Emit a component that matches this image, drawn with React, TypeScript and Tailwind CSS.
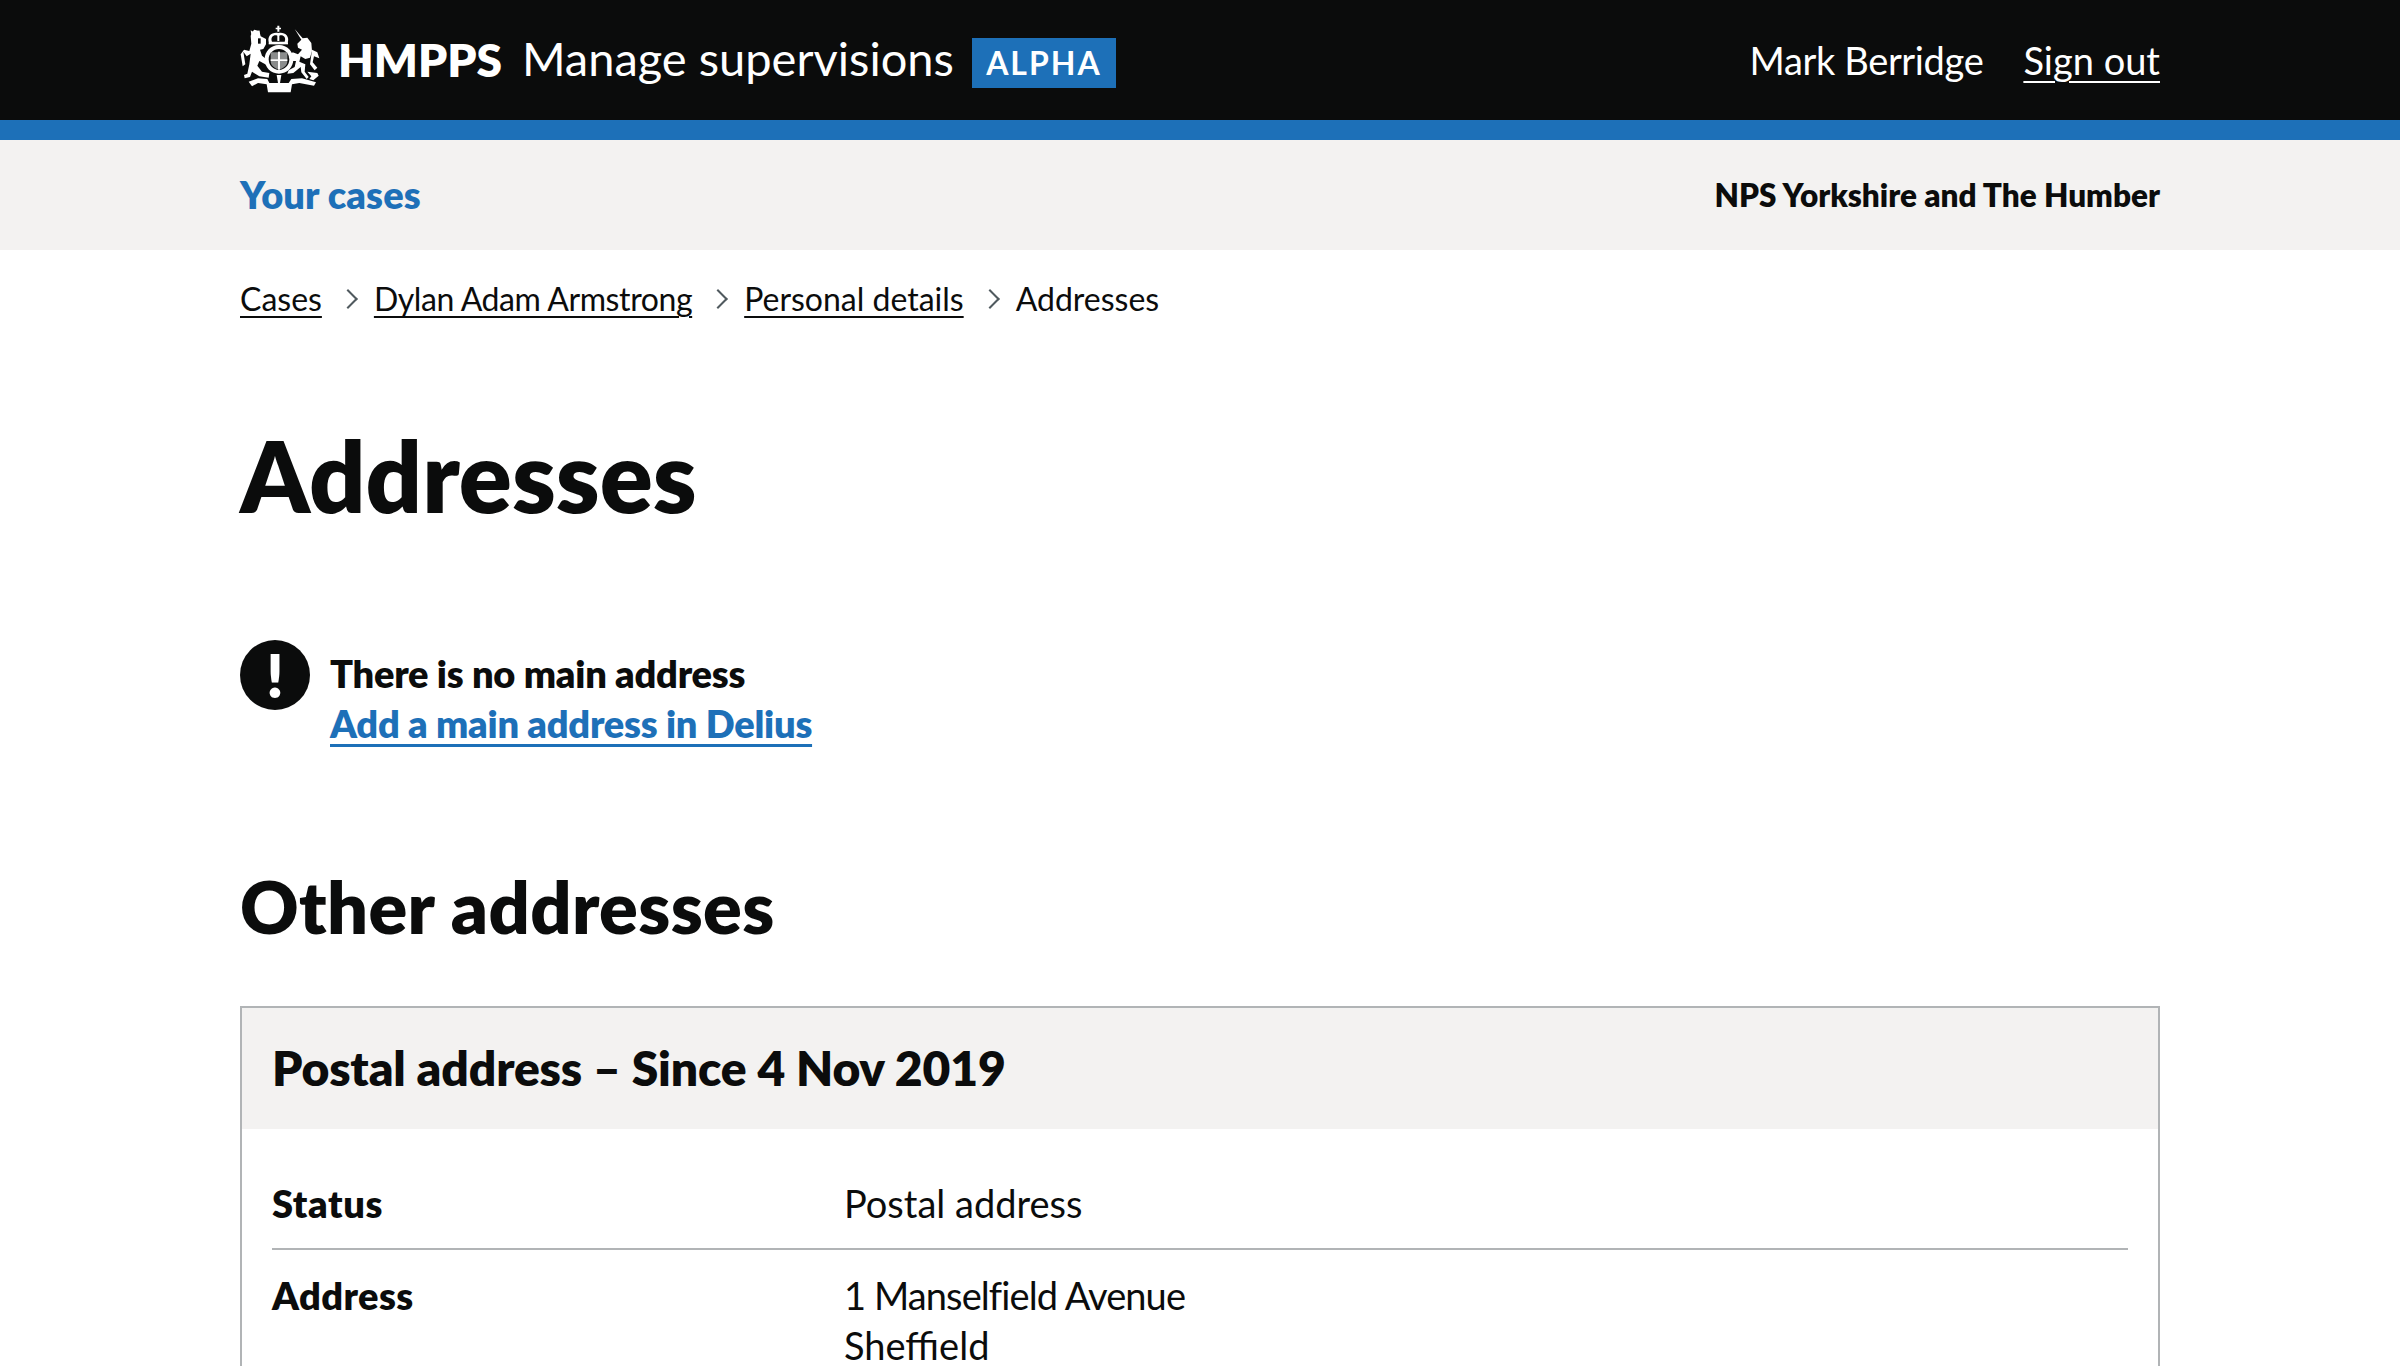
const fontStack = "font-['Lato','Noto_Sans',sans-serif]";

// simplified royal coat of arms, coordinates taken from the reference crop
function Crest() {
  return (
    <svg viewBox="30 10 240 210" className="w-[80px] h-[70px] shrink-0" fill="#ffffff">
      {/* crown */}
      <path d="M118 66 C108 42 128 30 145 34 C162 30 182 42 172 66 Z M126 60 L164 60 C170 46 158 38 148 42 L148 58 L142 58 L142 42 C132 38 120 46 126 60 Z" fillRule="evenodd" />
      <rect x="116" y="62" width="58" height="6" />
      <path d="M142 30 L142 23 L137 23 L137 18 L142 18 L142 12 L148 12 L148 18 L153 18 L153 23 L148 23 L148 30 Z" />
      {/* shield ring */}
      <path d="M147 70 C172 70 190 90 190 113 C190 137 172 156 147 156 C122 156 104 137 104 113 C104 90 122 70 147 70 Z M147 82 C130 82 116 96 116 113 C116 131 130 145 147 145 C164 145 178 131 178 113 C178 96 164 82 147 82 Z" fillRule="evenodd" />
      <path d="M122 92 L172 92 L172 118 C172 132 160 140 147 144 C134 140 122 132 122 118 Z" fill="#8a8c8c" />
      <rect x="144" y="90" width="6" height="54" fill="#ffffff" />
      <rect x="122" y="113" width="50" height="5" fill="#ffffff" />
      {/* lion */}
      <path d="M62 42 L72 24 L88 28 L92 44 L108 52 L108 68 L100 82 L90 84 L96 102 L116 118 L110 130 L88 118 L82 132 L96 150 L118 154 L116 168 L88 164 L66 150 L60 166 L44 170 L42 160 L52 156 L58 128 L62 96 L50 104 L40 90 L46 128 L38 134 L32 98 L42 84 L58 88 L64 66 Z" />
      <path d="M64 40 L62 26 L70 30 L74 24 L80 30 L88 26 L90 42 Z" />
      <path d="M84 50 L92 50 L92 66 L84 66 Z" fill="#0b0c0c" />
      {/* unicorn */}
      <path d="M194 22 L218 50 L232 48 L244 64 L246 88 L240 108 L226 112 L212 104 L208 120 L226 128 L224 150 L236 166 L230 172 L214 152 L212 136 L190 154 L172 156 L176 146 L194 136 L198 118 L184 118 L176 106 L188 92 L204 98 L216 84 L204 78 L202 66 L214 54 Z" />
      <path d="M246 84 L262 92 L268 110 L252 104 L248 122 L262 138 L254 146 L240 128 Z" />
      <path d="M232 150 L262 154 L266 162 L250 176 L238 172 L244 164 Z" />
      {/* motto ribbon */}
      <path d="M56 180 L84 170 L112 172 L118 184 L176 184 L184 172 L216 170 L258 182 L252 192 L208 184 L186 188 L182 212 L114 212 L110 188 L84 184 L66 194 Z" />
      <path d="M140 160 L154 160 L150 184 L144 184 Z" />
    </svg>
  );
}

function Chevron() {
  return (
    <span className="mx-[16px] flex w-[20px] justify-center">
      <span className="block h-[14px] w-[14px] rotate-45 border-t-2 border-r-2 border-[#505a5f]" />
    </span>
  );
}

export default function App() {
  return (
    <div className={`h-[1366px] overflow-hidden bg-white text-[#0b0c0c] ${fontStack}`}>
      {/* header */}
      <header className="h-[140px] border-b-[20px] border-[#1d70b8] bg-[#0b0c0c] text-white">
        <div className="mx-auto flex h-[120px] w-[1920px] items-center justify-between">
          <div className="flex items-center">
            <Crest />
            <span className="ml-[18px] text-[46px] leading-none font-extrabold">HMPPS</span>
            <span className="-mt-[3px] ml-[20px] text-[47px] leading-none">Manage supervisions</span>
            <span className="mt-[6px] ml-[18px] flex h-[50px] w-[144px] items-center justify-center bg-[#1d70b8] text-[32px] font-bold tracking-[2px]">
              ALPHA
            </span>
          </div>
          <div className="flex items-center text-[38px]">
            <span className="tracking-[-0.35px]">Mark Berridge</span>
            <a className="ml-[40px] underline underline-offset-[6px] decoration-2">Sign out</a>
          </div>
        </div>
      </header>

      {/* sub nav */}
      <div className="h-[110px] bg-[#f3f2f1]">
        <div className="mx-auto flex h-full w-[1920px] items-center justify-between">
          <a className="-mt-[2px] text-[38px] font-extrabold tracking-[0.1px] text-[#1d70b8]">Your cases</a>
          <span className="mt-[2px] text-[31.5px] font-extrabold">NPS Yorkshire and The Humber</span>
        </div>
      </div>

      <main className="mx-auto w-[1920px]">
        <nav className="mt-[29px] flex h-[40px] items-center text-[32px] leading-[40px]">
          <a className="underline underline-offset-[5px] decoration-2">Cases</a>
          <Chevron />
          <a className="tracking-[-0.4px] underline underline-offset-[5px] decoration-2">Dylan Adam Armstrong</a>
          <Chevron />
          <a className="underline underline-offset-[5px] decoration-2">Personal details</a>
          <Chevron />
          <span>Addresses</span>
        </nav>

        <h1 className="mt-[106px] text-[98.5px] leading-[100px] font-extrabold">Addresses</h1>

        {/* warning */}
        <div className="mt-[115px] flex h-[100px]">
          <div className="flex h-[70px] w-[70px] shrink-0 items-center justify-center rounded-full bg-[#0b0c0c] text-[60px] leading-none font-extrabold text-white">
            !
          </div>
          <div className="ml-[20px] pt-[8px] text-[38px] leading-[50px] font-extrabold tracking-[-0.25px]">
            <p>There is no main address</p>
            <a className="text-[#1d70b8] underline underline-offset-[6px] decoration-[3px]">Add a main address in Delius</a>
          </div>
        </div>

        <h2 className="mt-[126px] text-[72px] leading-[80px] font-extrabold tracking-[0.35px]">Other addresses</h2>

        {/* summary card */}
        <section className="mt-[60px] border-2 border-[#b1b4b6]">
          <div className="flex h-[121px] items-center bg-[#f3f2f1] px-[30px]">
            <h3 className="-mt-[2px] text-[48px] leading-none font-extrabold tracking-[-0.15px]">Postal address – Since 4 Nov 2019</h3>
          </div>
          <dl className="px-[30px] pt-[29px] text-[38px] leading-[50px]">
            <div className="flex border-b-2 border-[#b1b4b6] py-[20px]">
              <dt className="w-[572px] shrink-0 font-extrabold tracking-[0.6px]">Status</dt>
              <dd>Postal address</dd>
            </div>
            <div className="flex border-b-2 border-[#b1b4b6] py-[20px]">
              <dt className="w-[572px] shrink-0 font-extrabold tracking-[0.4px]">Address</dt>
              <dd>
                <span className="tracking-[-0.9px]">1 Manselfield Avenue</span>
                <br />
                Sheffield
              </dd>
            </div>
          </dl>
        </section>
      </main>
    </div>
  );
}
